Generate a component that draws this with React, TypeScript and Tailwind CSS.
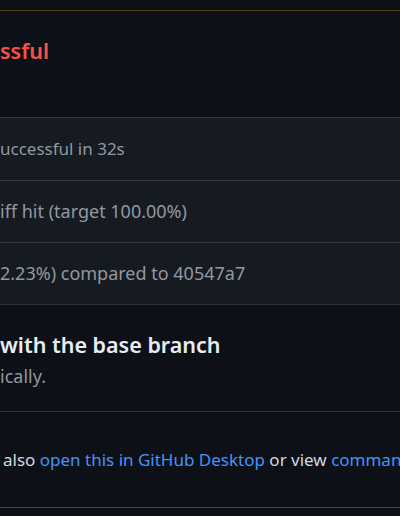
import React from "react";

function Clip({ hidden, shown, className = "" }: { hidden: string; shown: React.ReactNode; className?: string }) {
  return (
    <div className={"flex whitespace-nowrap " + className}>
      <span className="flex w-0 justify-end">{hidden}</span>
      <span>{shown}</span>
    </div>
  );
}

export default function App() {
  return (
    <div
      className="h-[516px] w-[400px] overflow-hidden bg-[#0d1117] pt-[10px]"
      style={{ fontFamily: '"Noto Sans", "Segoe UI", sans-serif' }}
    >
      <div className="border-y border-[#574219]">
        <div className="flex h-[106px] items-center pb-[26px]">
          <Clip
            hidden="Some checks were not succe"
            shown="ssful"
            className="text-[21.5px] font-semibold text-[#f85149]"
          />
        </div>
        <div className="border-t border-[#30363d] bg-[#161b22] text-[17px] text-[#9198a1]">
          <div className="flex h-[62px] items-center">
            <Clip hidden="CI / build (push) Successful in 32s — s" shown="uccessful in 32s" />
          </div>
          <div className="flex h-[62px] items-center border-t border-[#30363d]">
            <Clip hidden="codecov/patch — 0.00% of d" shown="iff hit (target 100.00%)" className="text-[18px]" />
          </div>
          <div className="flex h-[62px] items-center border-t border-[#30363d]">
            <Clip hidden="codecov/project — 87.41% (-" shown="2.23%) compared to 40547a7" className="text-[18px]" />
          </div>
        </div>
        <div className="flex h-[107px] flex-col justify-center border-t border-[#30363d] pt-[3px]">
          <Clip
            hidden="This branch has no conflicts "
            shown="with the base branch"
            className="text-[21.5px] font-semibold leading-[32px] text-[#e6edf3]"
          />
          <Clip
            hidden="Merging can be performed automat"
            shown="ically."
            className="text-[18px] leading-[30px] text-[#9198a1]"
          />
        </div>
        <div className="flex h-[96px] items-center border-t border-[#30363d] pt-[1px]">
          <Clip
            hidden="You can"
            shown={
              <>
                <span className="ml-[3px]">also</span> <span className="text-[#4493f8]">open this in GitHub Desktop</span> or view{" "}
                <span className="text-[#4493f8]">command line instructions</span>.
              </>
            }
            className="text-[17px] text-[#d1d7e0]"
          />
        </div>
      </div>
    </div>
  );
}
